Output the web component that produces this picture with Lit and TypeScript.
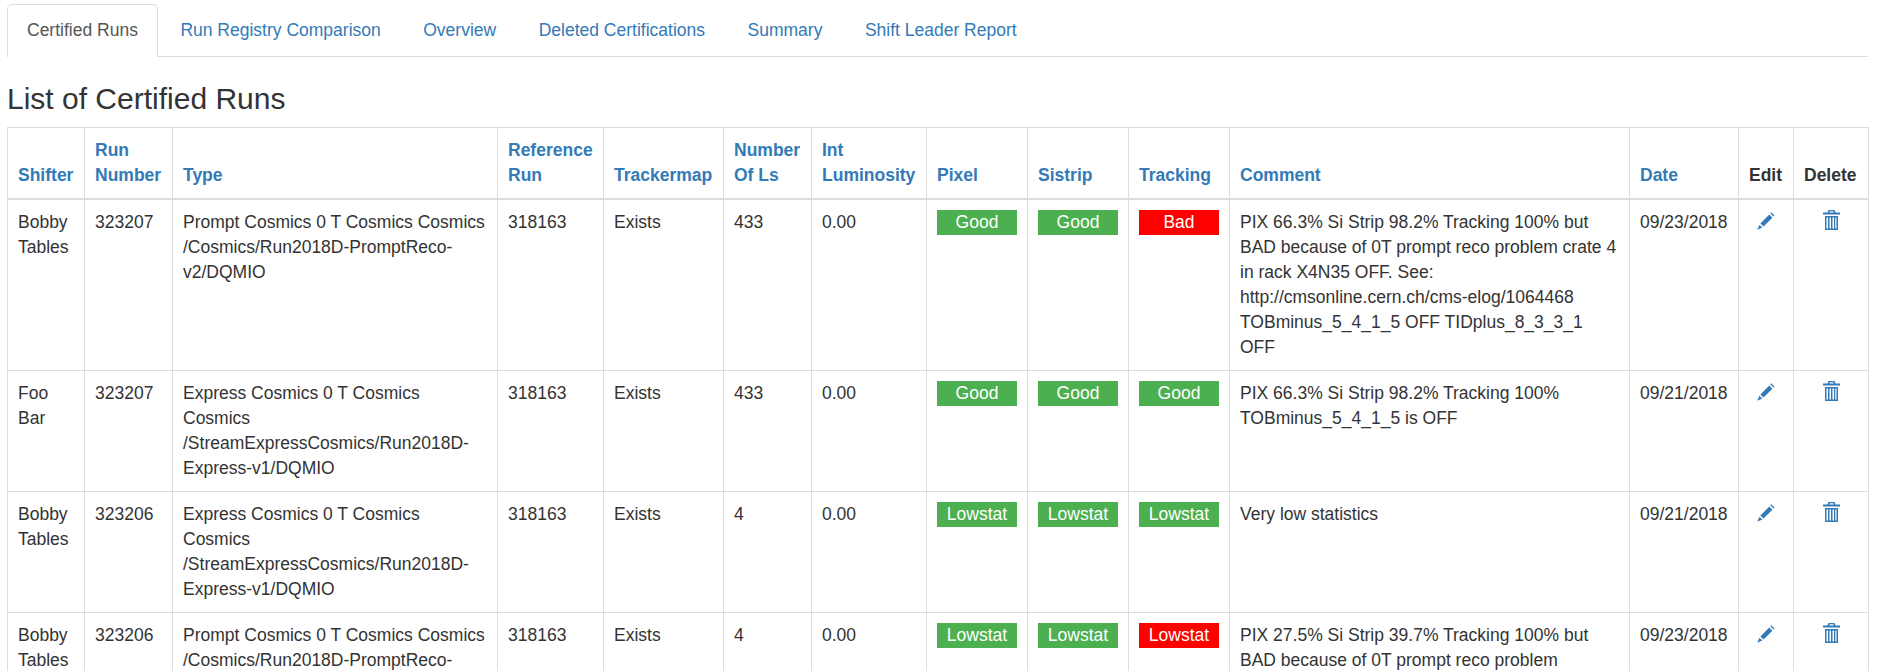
import { LitElement, html, css } from 'lit';
import { customElement } from 'lit/decorators.js';

const tabs = ['Certified Runs', 'Run Registry Comparison', 'Overview', 'Deleted Certifications', 'Summary', 'Shift Leader Report'];

const columns = [
  { label: 'Shifter', width: 77 },
  { label: 'Run Number', width: 88 },
  { label: 'Type', width: 325 },
  { label: 'Reference Run', width: 106 },
  { label: 'Trackermap', width: 120 },
  { label: 'Number Of Ls', width: 88 },
  { label: 'Int Luminosity', width: 115 },
  { label: 'Pixel', width: 101 },
  { label: 'Sistrip', width: 101 },
  { label: 'Tracking', width: 101 },
  { label: 'Comment', width: 400 },
  { label: 'Date', width: 109 },
  { label: 'Edit', width: 55, plain: true },
  { label: 'Delete', width: 75, plain: true },
];

const promptType = 'Prompt Cosmics 0 T Cosmics Cosmics /Cosmics/Run2018D-PromptReco-v2/DQMIO';
const expressType = 'Express Cosmics 0 T Cosmics Cosmics /StreamExpressCosmics/Run2018D-Express-v1/DQMIO';

const runs = [
  {
    shifter: 'Bobby Tables', run: 323207, type: promptType, ls: 433,
    pixel: ['Good', true], sistrip: ['Good', true], tracking: ['Bad', false],
    comment: 'PIX 66.3% Si Strip 98.2% Tracking 100% but BAD because of 0T prompt reco problem crate 4 in rack X4N35 OFF. See: http://cmsonline.cern.ch/cms-elog/1064468 TOBminus_5_4_1_5 OFF TIDplus_8_3_3_1 OFF',
    date: '09/23/2018',
  },
  {
    shifter: 'Foo Bar', run: 323207, type: expressType, ls: 433,
    pixel: ['Good', true], sistrip: ['Good', true], tracking: ['Good', true],
    comment: 'PIX 66.3% Si Strip 98.2% Tracking 100% TOBminus_5_4_1_5 is OFF',
    date: '09/21/2018',
  },
  {
    shifter: 'Bobby Tables', run: 323206, type: expressType, ls: 4,
    pixel: ['Lowstat', true], sistrip: ['Lowstat', true], tracking: ['Lowstat', true],
    comment: 'Very low statistics',
    date: '09/21/2018',
  },
  {
    shifter: 'Bobby Tables', run: 323206, type: promptType, ls: 4,
    pixel: ['Lowstat', true], sistrip: ['Lowstat', true], tracking: ['Lowstat', false],
    comment: 'PIX 27.5% Si Strip 39.7% Tracking 100% but BAD because of 0T prompt reco problem',
    date: '09/23/2018',
  },
];

const pencil = html`<svg class="icon pencil" width="18" height="18" viewBox="0 0 18 18">
  <path d="M12.3 2.6l3.1 3.1-8.9 8.9-3.1-3.100zM13.300 1.200l.9-.9 3.300 3.300-.9.9zM2.500 12.700l2.800 2.800-5.100 2.300z" fill="#337ab7"></path>
</svg>`;

const trash = html`<svg class="icon trash" width="17" height="20" viewBox="0 0 17 20">
  <path fill-rule="evenodd" d="M5.500 0h6l1 2.500h4.500v2h-17v-2h4.500zM6.700 1.200l-.4 1.300h4.400l-.4-1.300zM2 6h13v14h-13zM3.500 7.500v11h1.500v-11zM6.500 7.500v11h1.500v-11zM9.500 7.500v11h1.500v-11zM12.300 7.500v11h1.200v-11z" fill="#337ab7"></path>
</svg>`;

@customElement('app-root')
export class AppRoot extends LitElement {
  static styles = css`
    :host {
      display: block;
      height: 100vh;
      overflow: hidden;
      padding: 4px 9px 0 7px;
      box-sizing: border-box;
      font-family: 'Liberation Sans', Arial, sans-serif;
      font-size: 17.5px;
      line-height: 25px;
      color: #333;
      background: #fff;
    }

    .tabs {
      display: flex;
      gap: 2.500px;
      border-bottom: 1px solid #ddd;
      height: 52px;
    }

    .tab {
      height: 53px;
      box-sizing: border-box;
      padding: 13px 19px 0;
      border: 1px solid transparent;
      border-bottom: 0;
      color: #337ab7;
      white-space: nowrap;
    }

    .tab.active {
      color: #555;
      background: #fff;
      border-color: #ddd;
      border-radius: 5px 5px 0 0;
    }

    h3 {
      margin: 25px 0 12px;
      font-size: 30px;
      font-weight: 500;
      line-height: 33px;
    }

    table {
      width: 1861px;
      table-layout: fixed;
      border-collapse: collapse;
    }

    th, td {
      border: 1px solid #ddd;
      padding: 10px;
      text-align: left;
      vertical-align: top;
      overflow-wrap: break-word;
    }

    th {
      vertical-align: bottom;
      border-bottom: 2px solid #ddd;
      color: #337ab7;
      font-weight: 700;
    }

    th.plain {
      color: #333;
      padding-right: 0;
    }

    td.action {
      text-align: center;
    }

    .icon {
      display: inline-block;
      vertical-align: top;
    }

    .icon.pencil {
      margin-top: 2px;
    }

    .icon.trash {
      margin-left: 1px;
    }

    .badge {
      color: #fff;
      text-align: center;
    }

    .badge.ok {
      background: #4caf50;
    }

    .badge.bad {
      background: #f00;
    }
  `;

  render() {
    return html`
      <div class="tabs">
        ${tabs.map((t, i) => html`<div class="tab ${i === 0 ? 'active' : ''}">${t}</div>`)}
      </div>
      <h3>List of Certified Runs</h3>
      <table>
        <colgroup>
          ${columns.map((c) => html`<col style="width: ${c.width}px" />`)}
        </colgroup>
        <thead>
          <tr>
            ${columns.map((c) => html`<th class="${c.plain ? 'plain' : ''}">${c.label}</th>`)}
          </tr>
        </thead>
        <tbody>
          ${runs.map((r) => html`
            <tr>
              <td>${r.shifter}</td>
              <td>${r.run}</td>
              <td>${r.type}</td>
              <td>318163</td>
              <td>Exists</td>
              <td>${r.ls}</td>
              <td>0.00</td>
              <td>${this.badge(r.pixel)}</td>
              <td>${this.badge(r.sistrip)}</td>
              <td>${this.badge(r.tracking)}</td>
              <td>${r.comment}</td>
              <td>${r.date}</td>
              <td class="action">${pencil}</td>
              <td class="action">${trash}</td>
            </tr>
          `)}
        </tbody>
      </table>
    `;
  }

  badge(b: (string | boolean)[]) {
    return html`<div class="badge ${b[1] ? 'ok' : 'bad'}">${b[0]}</div>`;
  }
}
